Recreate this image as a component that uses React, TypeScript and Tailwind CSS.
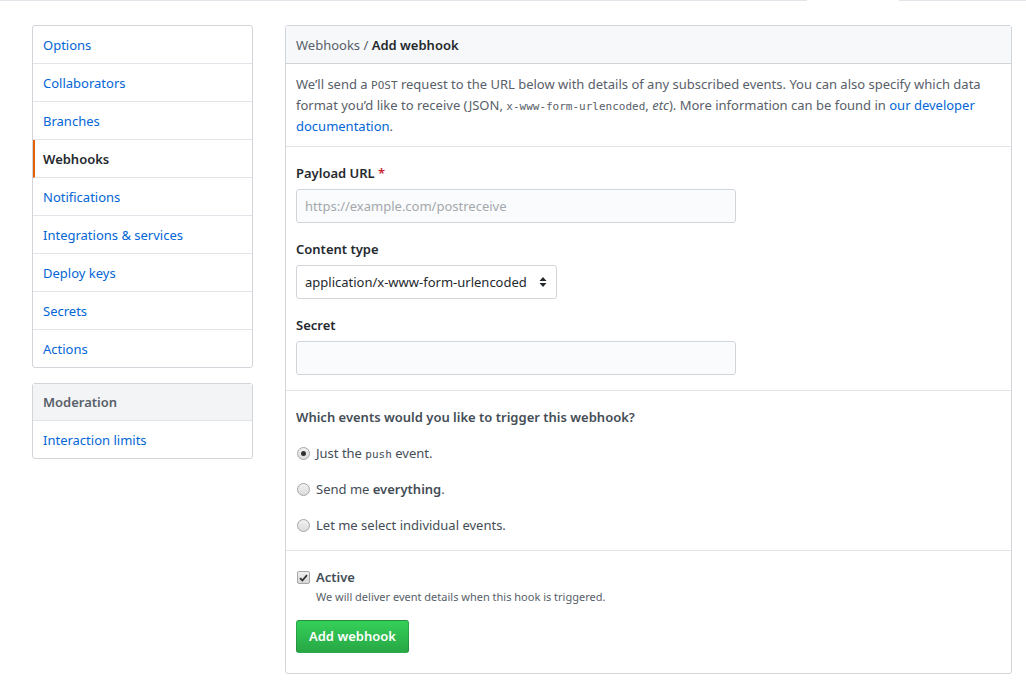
import React from 'react';

const font = { fontFamily: '"Noto Sans", "Liberation Sans", sans-serif' };
const mono = { fontFamily: '"DejaVu Sans Mono", "Liberation Mono", monospace' };

function Radio({ checked }: { checked?: boolean }) {
  return (
    <span className="w-[13px] h-[13px] rounded-full border border-[#a6a6a6] bg-gradient-to-b from-[#f1f1f1] to-[#dcdcdc] flex items-center justify-center shrink-0">
      {checked && <span className="w-[5px] h-[5px] rounded-full bg-[#333]" />}
    </span>
  );
}

function Checkbox() {
  return (
    <span className="w-[13px] h-[13px] rounded-[2px] border border-[#a6a6a6] bg-gradient-to-b from-[#f1f1f1] to-[#d6d6d6] flex items-center justify-center shrink-0">
      <svg width="9" height="8" viewBox="0 0 9 8">
        <path d="M1 4.2 L3.4 6.5 L8 1.2" stroke="#333" strokeWidth="1.8" fill="none" />
      </svg>
    </span>
  );
}

export default function App() {
  const items = [
    'Options',
    'Collaborators',
    'Branches',
    'Webhooks',
    'Notifications',
    'Integrations & services',
    'Deploy keys',
    'Secrets',
    'Actions',
  ];

  return (
    <div className="min-h-screen bg-white text-[13px] leading-[21px] text-[#24292e]" style={font}>
      <div className="flex h-px">
        <div className="w-[807px] bg-[#e1e4e8]" />
        <div className="w-[92px]" />
        <div className="flex-1 bg-[#e1e4e8]" />
      </div>

      <div className="flex gap-8 pl-8 pt-6">
        {/* sidebar */}
        <div className="w-[221px] shrink-0">
          <nav className="border border-[#d1d5da] rounded-[3px]">
            {items.map((item, i) => {
              const active = item === 'Webhooks';
              return (
                <div
                  key={item}
                  className={
                    (i < items.length - 1 ? 'border-b border-[#e1e4e8] ' : '') +
                    (active
                      ? 'border-l-[2px] border-l-[#e36209] pl-[8px] font-semibold text-[#24292e] '
                      : 'pl-[10px] text-[#0366d6] ') +
                    'pt-[9px] pb-[7px] pr-[10px]'
                  }
                >
                  {item}
                </div>
              );
            })}
          </nav>

          <nav className="mt-[15px] border border-[#d1d5da] rounded-[3px]">
            <div className="bg-[#f3f4f6] border-b border-[#e1e4e8] pt-[8px] pb-[7px] px-[10px] font-semibold text-[#586069]">
              Moderation
            </div>
            <div className="pt-[9px] pb-[7px] px-[10px] text-[#0366d6]">Interaction limits</div>
          </nav>
        </div>

        {/* main */}
        <div className="w-[727px] shrink-0 border border-[#d1d5da] rounded-[3px]">
          <div className="bg-[#f6f8fa] border-b border-[#d1d5da] px-[10px] pt-[9px] pb-[7px]">
            <span className="text-[#586069]">Webhooks / </span>
            <span className="font-semibold">Add webhook</span>
          </div>

          <div className="px-[10px] pt-[10px] pb-[9px] text-[#586069] border-b border-[#e1e4e8]">
            <p className="whitespace-nowrap">
              We’ll send a <code className="text-[11px] leading-none" style={mono}>POST</code> request to the URL below with details of any subscribed events. You can also specify which data
            </p>
            <p className="whitespace-nowrap">
              format you’d like to receive (JSON, <code className="text-[11px] leading-none" style={mono}>x-www-form-urlencoded</code>, <em>etc</em>). More information can be found in <span className="text-[#0366d6]">our developer</span>
            </p>
            <p>
              <span className="text-[#0366d6]">documentation</span>.
            </p>
          </div>

          <div className="px-[10px] pt-[16px] pb-[15px] border-b border-[#e1e4e8]">
            <label className="block font-semibold mb-[5px]">
              Payload URL <span className="text-[#cb2431]">*</span>
            </label>
            <div className="w-[440px] h-[34px] bg-[#fafbfc] border border-[#d1d5da] rounded-[3px] px-[8px] flex items-center text-[#a3a8ad]">
              https://example.com/postreceive
            </div>

            <label className="block font-semibold mt-[16px] mb-[5px]">Content type</label>
            <div className="w-[261px] h-[34px] bg-white border border-[#d1d5da] rounded-[3px] pl-[8px] pr-[9px] flex items-center justify-between whitespace-nowrap">
              <span>application/x-www-form-urlencoded</span>
              <svg width="8" height="12" viewBox="0 0 8 12">
                <path d="M4 1 L7.5 5 L0.5 5 Z M4 11 L7.5 7 L0.5 7 Z" fill="#24292e" />
              </svg>
            </div>

            <label className="block font-semibold mt-[16px] mb-[5px]">Secret</label>
            <div className="w-[440px] h-[34px] bg-[#fafbfc] border border-[#d1d5da] rounded-[3px]" />
          </div>

          <div className="px-[10px] pt-[16px] pb-[14px] border-b border-[#e1e4e8]">
            <div className="font-semibold text-[#444d56]">Which events would you like to trigger this webhook?</div>
            <div className="flex flex-col gap-[15px] mt-[15px] text-[#444d56]">
              <div className="flex items-center gap-[6px] pl-px">
                <Radio checked />
                <span>
                  Just the <code className="text-[11px] leading-none" style={mono}>push</code> event.
                </span>
              </div>
              <div className="flex items-center gap-[6px] pl-px">
                <Radio />
                <span>
                  Send me <span className="font-semibold">everything</span>.
                </span>
              </div>
              <div className="flex items-center gap-[6px] pl-px">
                <Radio />
                <span>Let me select individual events.</span>
              </div>
            </div>
          </div>

          <div className="px-[10px] pt-[16px] pb-[20px]">
            <div className="flex items-center gap-[6px] pl-px">
              <Checkbox />
              <span className="font-semibold text-[#444d56]">Active</span>
            </div>
            <div className="pl-[20px] text-[11px] leading-[18px] text-[#586069]">
              We will deliver event details when this hook is triggered.
            </div>
            <button className="mt-[14px] h-[33px] px-[12px] rounded-[3px] border border-[rgba(27,31,35,0.2)] bg-gradient-to-b from-[#34d058] to-[#28a745] text-white font-semibold">
              Add webhook
            </button>
          </div>
        </div>
      </div>
    </div>
  );
}
